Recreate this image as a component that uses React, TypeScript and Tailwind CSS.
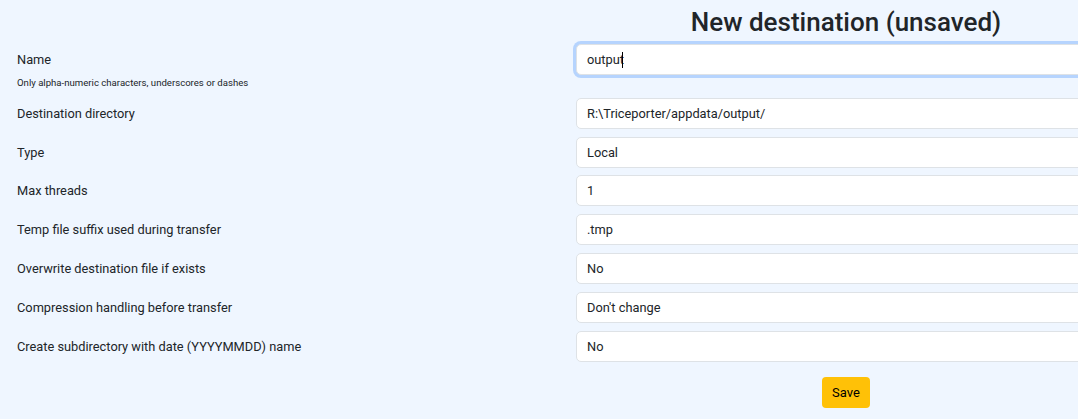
import React from 'react';

const fields = [
  { label: 'Destination directory', value: 'R:\\Triceporter/appdata/output/' },
  { label: 'Type', value: 'Local' },
  { label: 'Max threads', value: '1' },
  { label: 'Temp file suffix used during transfer', value: '.tmp' },
  { label: 'Overwrite destination file if exists', value: 'No' },
  { label: 'Compression handling before transfer', value: "Don't change" },
  { label: 'Create subdirectory with date (YYYYMMDD) name', value: 'No' },
];

const inputCls =
  'h-[31px] w-full rounded-[5px] border border-[#dee2e6] bg-white pl-[10px] text-[12.8px] text-[#212529] outline-none';

export default function App() {
  return (
    <div className="h-[419px] w-[1078px] overflow-hidden bg-[#eff6ff] font-['Roboto','Liberation_Sans',sans-serif] text-[#212529]">
      <div className="w-[1116px] pl-[17px]">
        {/* header */}
        <div className="grid grid-cols-[559px_540px]">
          <div />
          <h1 className="flex h-[44px] items-center justify-center text-[26px] font-medium">
            New destination (unsaved)
          </h1>
        </div>

        <div className="flex flex-col gap-y-[7.83px]">
          {/* name */}
          <div className="grid grid-cols-[559px_540px]">
            <div>
              <div className="flex h-[31px] items-center text-[12.8px]">Name</div>
              <div className="text-[9.6px] leading-[15px]">
                Only alpha-numeric characters, underscores or dashes
              </div>
            </div>
            <div className="relative self-start">
              <input
                readOnly
                value="output"
                className={inputCls + ' border-[#86b7fe] caret-transparent shadow-[0_0_0_3px_rgba(13,110,253,0.25)]'}
              />
              <span className="absolute left-[46px] top-[8px] h-[16px] w-px bg-black" />
            </div>
          </div>

          {fields.map((f) => (
            <div key={f.label} className="grid grid-cols-[559px_540px]">
              <label className="flex h-[31px] items-center text-[12.8px]">{f.label}</label>
              <input readOnly value={f.value} className={inputCls} />
            </div>
          ))}
        </div>

        <div className="grid grid-cols-[559px_540px] pt-[15px]">
          <div />
          <div className="flex justify-center">
            <button
              type="button"
              className="h-[31px] w-[48px] rounded-[4px] bg-[#ffc107] text-[13px] text-black"
            >
              Save
            </button>
          </div>
        </div>
      </div>
    </div>
  );
}
